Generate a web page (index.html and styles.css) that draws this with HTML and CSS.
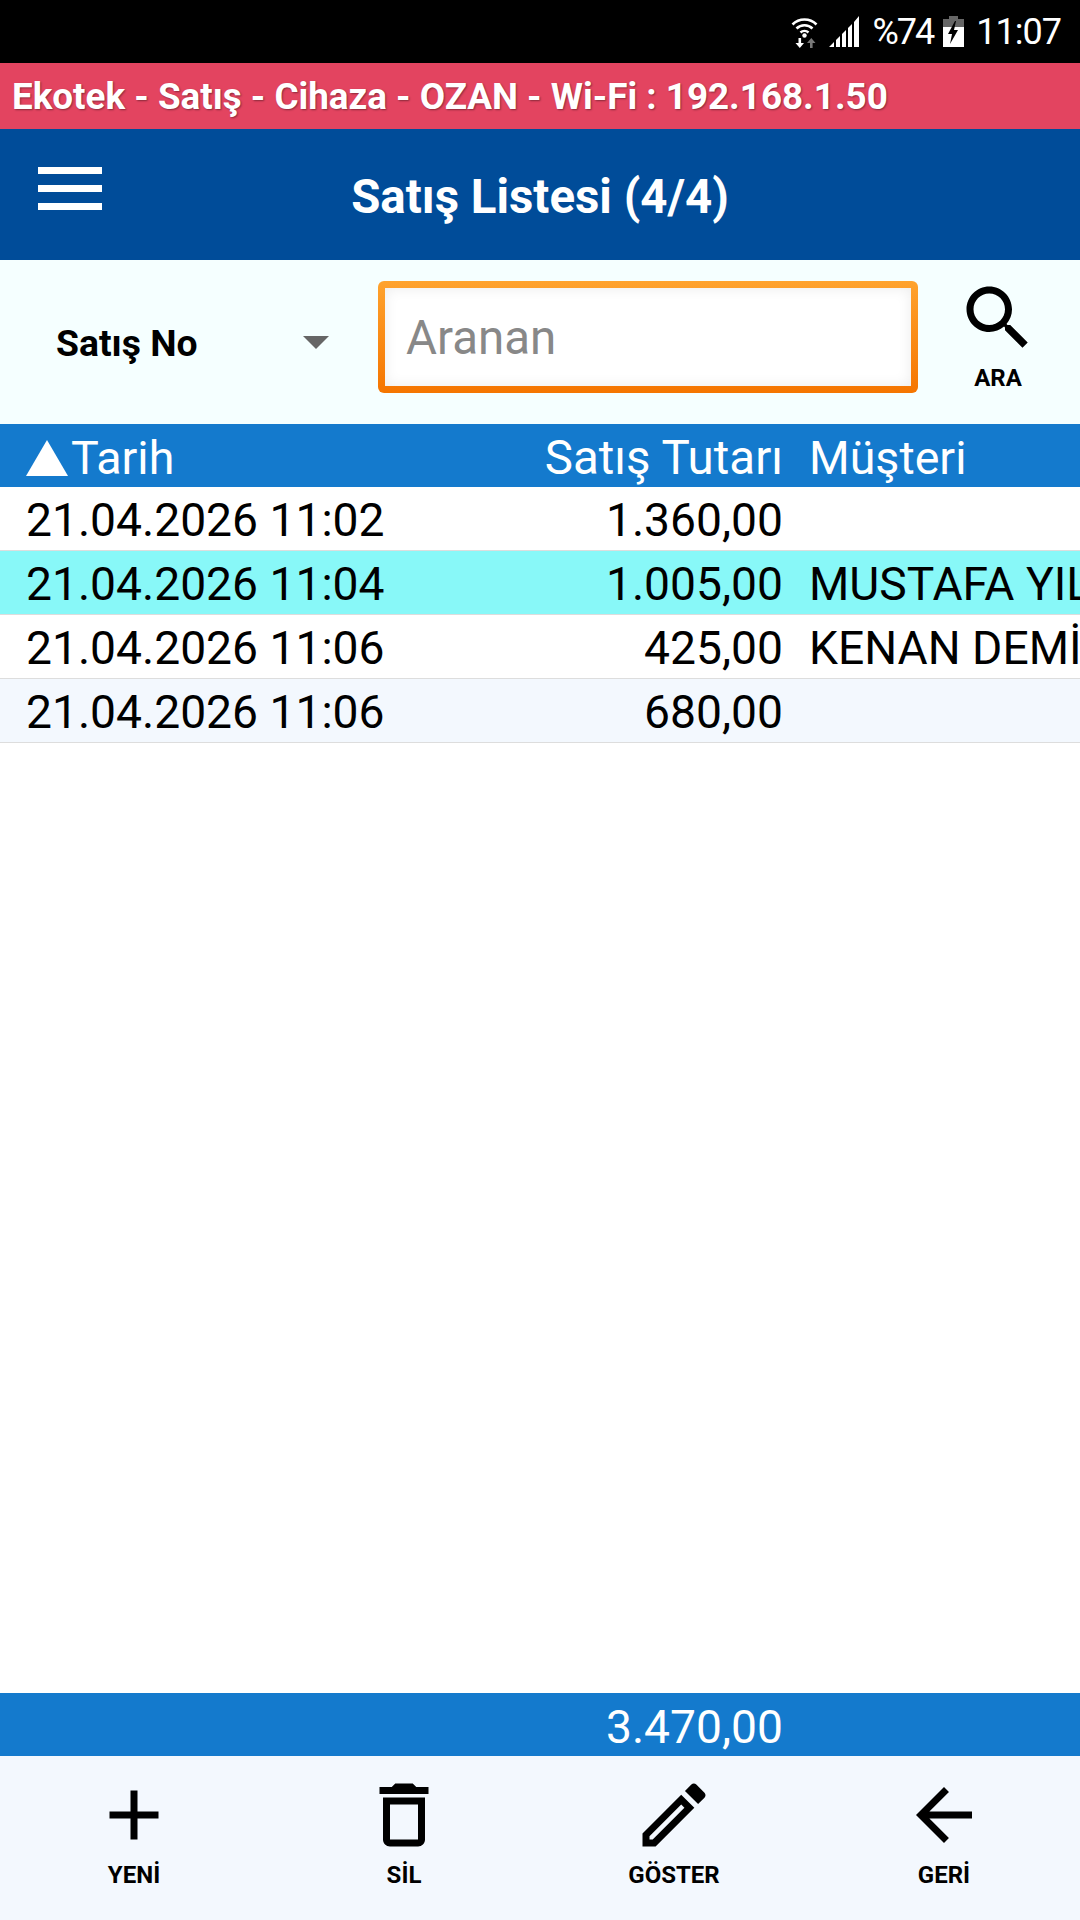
FILE: index.html
```html
<!DOCTYPE html>
<html lang="tr">
<head>
    <meta charset="UTF-8">
    <meta name="viewport" content="width=device-width, initial-scale=1.0">
    <title>Satış Listesi</title>
    <link rel="stylesheet" href="styles.css">
</head>

<body>
    <div class="status-bar">
        <svg class="icon-wifi" width="27" height="32" viewBox="0 0 27 32">
            <path d="M1.5 8.5a17 17 0 0 1 24 0M5.5 12.5a11.5 11.5 0 0 1 16 0M9.5 16.5a6 6 0 0 1 8 0" fill="none" stroke="#fff" stroke-width="2.6"/>
            <circle cx="13.5" cy="19.5" r="2.2" fill="#fff"/>
            <path d="M7.5 22h2.6v5H13l-4.2 5-4.3-5h3z" fill="#fff"/>
            <path d="M19 32v-5h-3l4.300-5 4.200 5h-2.900v5z" fill="#777"/>
        </svg>
        <svg class="icon-signal" width="31" height="31" viewBox="0 0 31 31">
            <path d="M0 31l5-5v5zM7 31v-7l4-4v11zM13 31V18l4-4v17zM19 31V12l4-4v23zM25 31V6l5-6v31z" fill="#fff"/>
        </svg>
        <span class="battery-text">%74</span>
        <svg class="icon-battery" width="21" height="31" viewBox="0 0 21 31">
            <path d="M6 0h9v3h6v10H0V3h6z" fill="#666"/>
            <path d="M0 11h21v20H0z" fill="#fff"/>
            <path d="M12 5L5 18h4l-2 10 8-14h-4l2-9z" fill="#000"/>
        </svg>
        <span class="clock">11:07</span>
    </div>

    <div class="info-bar">Ekotek - Satış - Cihaza - OZAN - Wi-Fi : 192.168.1.50</div>

    <div class="header">
        <div class="menu-button">
            <span></span>
            <span></span>
            <span></span>
        </div>
        <h1>Satış Listesi (4/4)</h1>
    </div>

    <div class="filter">
        <div class="select">
            <span>Satış No</span>
            <div class="select-arrow"></div>
        </div>
        <div class="search-box">
            <input type="text" placeholder="Aranan">
        </div>
        <div class="search-button">
            <svg width="84" height="84" viewBox="0 0 24 24">
                <path d="M15.5 14h-.79l-.28-.27C15.41 12.59 16 11.11 16 9.500 16 5.910 13.090 3 9.500 3S3 5.910 3 9.500 5.910 16 9.500 16c1.610 0 3.090-.59 4.230-1.570l.27.28v.79l5 4.990L20.490 19l-4.990-5zm-6 0C7.010 14 5 11.990 5 9.500S7.010 5 9.500 5 14 7.010 14 9.500 11.990 14 9.500 14z"/>
            </svg>
            <span>ARA</span>
        </div>
    </div>

    <div class="row row-head">
        <div class="col-date"><span class="sort-arrow"></span>Tarih</div>
        <div class="col-amount">Satış Tutarı</div>
        <div class="col-name">Müşteri</div>
    </div>

    <div class="list">
        <div class="row">
            <div class="col-date">21.04.2026 11:02</div>
            <div class="col-amount">1.360,00</div>
            <div class="col-name"></div>
        </div>
        <div class="row row-selected">
            <div class="col-date">21.04.2026 11:04</div>
            <div class="col-amount">1.005,00</div>
            <div class="col-name">MUSTAFA YILDIZ</div>
        </div>
        <div class="row">
            <div class="col-date">21.04.2026 11:06</div>
            <div class="col-amount">425,00</div>
            <div class="col-name">KENAN DEMİR</div>
        </div>
        <div class="row row-alt">
            <div class="col-date">21.04.2026 11:06</div>
            <div class="col-amount">680,00</div>
            <div class="col-name"></div>
        </div>
    </div>

    <div class="row row-total">
        <div class="col-date"></div>
        <div class="col-amount">3.470,00</div>
        <div class="col-name"></div>
    </div>

    <div class="toolbar">
        <div class="tool">
            <svg width="84" height="84" viewBox="0 0 24 24"><path d="M19 13h-6v6h-2v-6H5v-2h6V5h2v6h6v2z"/></svg>
            <span>YENİ</span>
        </div>
        <div class="tool">
            <svg width="84" height="84" viewBox="0 0 24 24"><path d="M6 19c0 1.100.9 2 2 2h8c1.100 0 2-.9 2-2V7H6v12zM8 9h8v10H8V9zm7.500-5l-1-1h-5l-1 1H5v2h14V4z"/></svg>
            <span>SİL</span>
        </div>
        <div class="tool">
            <svg width="84" height="84" viewBox="0 0 24 24"><path d="M14.060 9.020l.92.92L5.920 19H5v-.92l9.060-9.060M17.660 3c-.25 0-.51.1-.7.29l-1.830 1.830 3.750 3.750 1.830-1.830c.39-.39.39-1.020 0-1.410l-2.340-2.340c-.2-.2-.45-.29-.71-.29zm-3.600 3.190L3 17.250V21h3.750L17.810 9.940l-3.750-3.750z"/></svg>
            <span>GÖSTER</span>
        </div>
        <div class="tool">
            <svg width="84" height="84" viewBox="0 0 24 24"><path d="M20 11H7.830l5.590-5.590L12 4l-8 8 8 8 1.410-1.410L7.830 13H20v-2z"/></svg>
            <span>GERİ</span>
        </div>
    </div>
</body>
</html>
```

FILE: styles.css
```css
body{
    font-family: Roboto, "Liberation Sans", sans-serif;
    display: flex;
    flex-direction: column;
    height: 100vh;
    margin: 0;
    background-color: #fff;
    color: #000;
}
.status-bar{
    height: 63px;
    background-color: #000;
    color: #fff;
    display: flex;
    justify-content: flex-end;
    align-items: center;
    padding-right: 19px;
    font-size: 36px;
}
.status-bar svg{
    display: block;
}
.icon-signal{
    margin-left: 11px;
}
.battery-text{
    margin-left: 13px;
    letter-spacing: -2px;
}
.icon-battery{
    margin-left: 10px;
}
.clock{
    margin-left: 12px;
    letter-spacing: -1px;
}
.info-bar{
    height: 66px;
    line-height: 68px;
    background-color: #e34460;
    color: #fff;
    font-size: 36.8px;
    font-weight: bold;
    padding-left: 12px;
    text-shadow: 1px 1px 2px rgba(0,0,0,.4);
    white-space: nowrap;
}
.header{
    height: 131px;
    background-color: #004c99;
    color: #fff;
    display: flex;
    justify-content: center;
    align-items: center;
    position: relative;
}
.header h1{
    margin: 0;
    padding-top: 4px;
    font-size: 47.4px;
    font-weight: bold;
}
.menu-button{
    position: absolute;
    left: 38px;
    top: 38px;
    width: 64px;
    display: flex;
    flex-direction: column;
    gap: 11px;
}
.menu-button span{
    height: 7px;
    background-color: #fff;
}
.filter{
    height: 164px;
    background-color: #f5ffff;
    display: flex;
    align-items: flex-start;
}
.select{
    width: 378px;
    box-sizing: border-box;
    height: 164px;
    padding: 2px 49px 0 56px;
    display: flex;
    justify-content: space-between;
    align-items: center;
    font-size: 37.3px;
    font-weight: bold;
}
.select-arrow{
    width: 0;
    height: 0;
    margin-bottom: 2px;
    border-left: 13px solid transparent;
    border-right: 13px solid transparent;
    border-top: 13px solid #666;
}
.search-box{
    width: 540px;
    height: 112px;
    margin-top: 21px;
    box-sizing: border-box;
    padding: 7px;
    border-radius: 6px;
    background: linear-gradient(#ffa32e, #f57500);
}
.search-box input{
    display: block;
    width: 100%;
    height: 100%;
    box-sizing: border-box;
    border: 0;
    outline: 0;
    padding: 2px 0 0 21px;
    background-color: #fff;
    box-shadow: inset 0 0 14px rgba(0,0,0,.08);
    font-family: inherit;
    font-size: 47.5px;
}
.search-box input::placeholder{
    color: #888;
}
.search-button{
    width: 162px;
    padding-top: 16px;
    padding-right: 2px;
    box-sizing: border-box;
    display: flex;
    flex-direction: column;
    align-items: center;
    font-size: 24px;
    font-weight: bold;
}
.search-button svg{
    display: block;
}
.search-button span{
    margin-top: 4px;
}
.row{
    height: 64px;
    box-sizing: border-box;
    padding-top: 2px;
    border-bottom: 1px solid #ddd;
    display: flex;
    align-items: center;
    font-size: 46.2px;
    white-space: nowrap;
    overflow: hidden;
}
.col-date{
    width: 472px;
    box-sizing: border-box;
    padding-left: 26px;
    display: flex;
    align-items: center;
}
.col-amount{
    width: 311px;
    text-align: right;
}
.col-name{
    margin-left: 26px;
    width: 271px;
    overflow: hidden;
}
.row-head, .row-total{
    height: 63px;
    padding-top: 4px;
    border-bottom: 0;
    background-color: #147acd;
    color: #fff;
    flex-shrink: 0;
}
.row-head{
    font-size: 46.6px;
}
.row-head .col-amount{
    font-size: 47.5px;
}
.sort-arrow{
    width: 0;
    height: 0;
    margin-right: 3px;
    border-left: 21px solid transparent;
    border-right: 21px solid transparent;
    border-bottom: 36px solid #fff;
}
.list{
    flex: 1;
}
.row-selected{
    background-color: #88f8f8;
}
.row-alt{
    background-color: #f3f8fe;
}
.toolbar{
    height: 164px;
    background-color: #f3f8fe;
    display: grid;
    grid-template-columns: repeat(4, 270px);
}
.tool{
    padding: 17px 2px 0 0;
    display: flex;
    flex-direction: column;
    align-items: center;
    font-size: 24px;
    font-weight: bold;
}
.tool svg{
    display: block;
}
.tool span{
    margin-top: 4px;
}
```
